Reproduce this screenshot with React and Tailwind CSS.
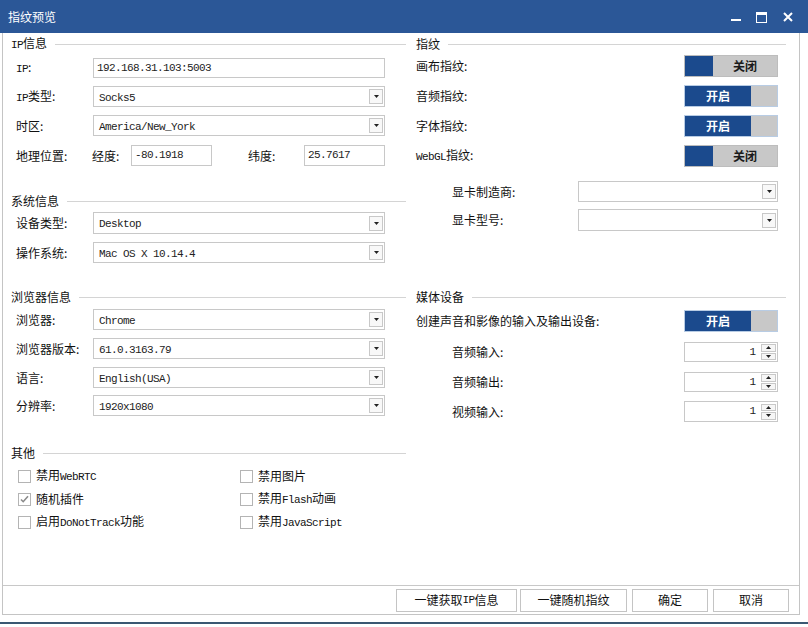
import React from "react";

// 字体：中文用 Noto Sans CJK SC，英文数字用等宽字体（模拟宋体半角）
const cjk = "font-['Noto_Sans_CJK_SC','Noto_Sans',sans-serif]";
const mono = "font-['Liberation_Mono','Noto_Sans_CJK_SC',monospace]";

// 把一段文字里的英文/数字部分换成等宽字体
function Txt({ children }) {
  if (typeof children !== "string") return children;
  const parts = children.split(/([A-Za-z0-9.]+)/);
  return parts.map((p, i) =>
    /^[A-Za-z0-9.]+$/.test(p) ? (
      <span key={i} className={`${mono} text-[11px] tracking-[-0.6px]`}>
        {p}
      </span>
    ) : (
      <React.Fragment key={i}>{p}</React.Fragment>
    )
  );
}

function GroupHeader({ title, className = "" }) {
  return (
    <div className={`flex items-center h-[16px] ${className}`}>
      <span className="text-[12px] leading-none text-[#111]">
        <Txt>{title}</Txt>
      </span>
      <div className="flex-1 border-t border-[#d4d4d4] ml-[8px]" />
    </div>
  );
}

function DropArrow() {
  return (
    <div className="w-[14px] h-[15px] mr-[1px] border border-[#c8c8c8] bg-[#f8f8f8] flex items-center justify-center">
      <svg width="5" height="3" viewBox="0 0 5 3">
        <path d="M0 0h5L2.5 3z" fill="#222" />
      </svg>
    </div>
  );
}

function Select({ value, className = "" }) {
  return (
    <div className={`flex items-center justify-between border border-[#c8c8c8] bg-white ${className}`}>
      <span className={`${mono} text-[11px] tracking-[-0.6px] text-[#222] pl-[5px] pt-[1px] self-start mt-[2px]`}>
        {value}
      </span>
      <DropArrow />
    </div>
  );
}

function TextBox({ value, className = "" }) {
  return (
    <div className={`flex items-center border border-[#c8c8c8] bg-white ${className}`}>
      <span className={`${mono} text-[11px] tracking-[-0.6px] text-[#222] pl-[3px]`}>{value}</span>
    </div>
  );
}

function FieldRow({ label, children, className = "" }) {
  return (
    <div className={`flex items-center ${className}`}>
      <span className="w-[77px] text-[12px] text-[#111] pl-[13px] box-content">
        <Txt>{label}</Txt>
      </span>
      {children}
    </div>
  );
}

function Toggle({ on }) {
  if (on) {
    return (
      <div className="w-[94px] h-[22px] bg-[#c8c8c8] flex border border-[#b8cce4]">
        <div className="w-[66px] h-full bg-[#1b4a8d] flex items-center justify-center text-white text-[12px] font-bold">
          开启
        </div>
      </div>
    );
  }
  return (
    <div className="w-[94px] h-[22px] bg-[#c8c8c8] flex border border-[#bdbdbd]">
      <div className="w-[28px] h-full bg-[#1b4a8d]" />
      <div className="flex-1 flex items-center justify-center text-[12px] font-bold text-[#1a1a1a]">关闭</div>
    </div>
  );
}

function Spinner({ value, className = "" }) {
  return (
    <div className={`w-[94px] h-[20px] border border-[#c8c8c8] bg-white flex items-center justify-end ${className}`}>
      <span className={`${mono} text-[11px] text-[#222] mr-[5px]`}>{value}</span>
      <div className="w-[15px] h-[16px] mr-[1px] flex flex-col gap-[1px]">
        <div className="flex-1 border border-[#c8c8c8] bg-[#f6f6f6] flex items-center justify-center">
          <svg width="5" height="3" viewBox="0 0 5 3">
            <path d="M0 3h5L2.5 0z" fill="#222" />
          </svg>
        </div>
        <div className="flex-1 border border-[#c8c8c8] bg-[#f6f6f6] flex items-center justify-center">
          <svg width="5" height="3" viewBox="0 0 5 3">
            <path d="M0 0h5L2.5 3z" fill="#222" />
          </svg>
        </div>
      </div>
    </div>
  );
}

function Check({ label, checked }) {
  return (
    <div className="flex items-center h-[16px]">
      <div className="w-[13px] h-[13px] border border-[#b4b4b4] bg-white flex items-center justify-center">
        {checked && (
          <svg width="9" height="8" viewBox="0 0 9 8">
            <path d="M1 4.5l2.2 2.2L8 1.2" stroke="#8a8a8a" strokeWidth="1.6" fill="none" />
          </svg>
        )}
      </div>
      <span className="ml-[5px] text-[12px] text-[#111]">
        <Txt>{label}</Txt>
      </span>
    </div>
  );
}

function RightRow({ label, children, className = "", indent = false }) {
  return (
    <div className={`flex items-center justify-between pr-[21px] ${indent ? "pl-[46px]" : "pl-[10px]"} ${className}`}>
      <span className="text-[12px] text-[#111]">
        <Txt>{label}</Txt>
      </span>
      {children}
    </div>
  );
}

function Btn({ children, className = "" }) {
  return (
    <div className={`h-[23px] border border-[#c4c4c4] bg-white flex items-center justify-center text-[12px] text-[#111] ${className}`}>
      <Txt>{children}</Txt>
    </div>
  );
}

export default function App() {
  return (
    <div className={`w-[808px] h-[627px] bg-white overflow-hidden flex flex-col ${cjk}`}>
      {/* 标题栏 */}
      <div className="h-[33px] shrink-0 bg-[#2b5797] flex items-center justify-between pl-[8px]">
        <span className="text-white text-[12px]">指纹预览</span>
        <div className="flex items-center h-full">
          <svg width="12" height="12" viewBox="0 0 12 12" className="mr-[14px] mt-[1px]">
            <rect x="1" y="8" width="10" height="2" fill="#fff" />
          </svg>
          <svg width="11" height="11" viewBox="0 0 11 11" className="mr-[16px] mt-[1px]">
            <rect x="0.5" y="0.5" width="10" height="10" fill="none" stroke="#fff" />
            <rect x="0" y="0" width="11" height="3" fill="#fff" />
          </svg>
          <svg width="10" height="10" viewBox="0 0 10 10" className="mr-[15px] mt-[1px]">
            <path d="M1 1l8 8M9 1l-8 8" stroke="#fff" strokeWidth="2" />
          </svg>
        </div>
      </div>

      {/* 窗体 */}
      <div className="ml-[2px] w-[798px] h-[582px] shrink-0 border-x border-b border-[#c4c4c4] flex flex-col">
        <div className="h-[552px] flex pt-[3px]">
          {/* 左列 */}
          <div className="w-[403px] flex flex-col">
            <GroupHeader title="IP信息" className="pl-[8px]" />
            <FieldRow label="IP:" className="mt-[6px] h-[20px]">
              <TextBox value="192.168.31.103:5003" className="w-[292px] h-[20px]" />
            </FieldRow>
            <FieldRow label="IP类型:" className="mt-[8px] h-[21px]">
              <Select value="Socks5" className="w-[292px] h-[21px]" />
            </FieldRow>
            <FieldRow label="时区:" className="mt-[8px] h-[21px]">
              <Select value="America/New_York" className="w-[292px] h-[21px]" />
            </FieldRow>
            <div className="mt-[9px] h-[21px] flex items-center">
              <span className="w-[76px] text-[12px] text-[#111] pl-[13px] box-content">地理位置:</span>
              <span className="w-[39px] text-[12px] text-[#111]">经度:</span>
              <TextBox value="-80.1918" className="w-[81px] h-[21px]" />
              <span className="ml-[36px] w-[56px] text-[12px] text-[#111]">纬度:</span>
              <TextBox value="25.7617" className="w-[81px] h-[21px]" />
            </div>

            <GroupHeader title="系统信息" className="pl-[8px] mt-[27px]" />
            <FieldRow label="设备类型:" className="mt-[3px] h-[22px]">
              <Select value="Desktop" className="w-[292px] h-[22px]" />
            </FieldRow>
            <FieldRow label="操作系统:" className="mt-[8px] h-[21px]">
              <Select value="Mac OS X 10.14.4" className="w-[292px] h-[21px]" />
            </FieldRow>

            <GroupHeader title="浏览器信息" className="pl-[8px] mt-[26px]" />
            <FieldRow label="浏览器:" className="mt-[4px] h-[21px]">
              <Select value="Chrome" className="w-[292px] h-[21px]" />
            </FieldRow>
            <FieldRow label="浏览器版本:" className="mt-[8px] h-[21px]">
              <Select value="61.0.3163.79" className="w-[292px] h-[21px]" />
            </FieldRow>
            <FieldRow label="语言:" className="mt-[8px] h-[21px]">
              <Select value="English(USA)" className="w-[292px] h-[21px]" />
            </FieldRow>
            <FieldRow label="分辨率:" className="mt-[7px] h-[21px]">
              <Select value="1920x1080" className="w-[292px] h-[21px]" />
            </FieldRow>

            <GroupHeader title="其他" className="pl-[8px] mt-[29px]" />
            <div className="grid grid-cols-[222px_1fr] pl-[15px] mt-[7px] gap-y-[7px]">
              <Check label="禁用WebRTC" />
              <Check label="禁用图片" />
              <Check label="随机插件" checked />
              <Check label="禁用Flash动画" />
              <Check label="启用DoNotTrack功能" />
              <Check label="禁用JavaScript" />
            </div>
          </div>

          {/* 右列 */}
          <div className="flex-1 flex flex-col">
            <GroupHeader title="指纹" className="pl-[10px] pr-[13px]" />
            <RightRow label="画布指纹:" className="mt-[3px] h-[22px]">
              <Toggle on={false} />
            </RightRow>
            <RightRow label="音频指纹:" className="mt-[8px] h-[22px]">
              <Toggle on />
            </RightRow>
            <RightRow label="字体指纹:" className="mt-[8px] h-[22px]">
              <Toggle on />
            </RightRow>
            <RightRow label="WebGL指纹:" className="mt-[8px] h-[22px]">
              <Toggle on={false} />
            </RightRow>
            <RightRow label="显卡制造商:" indent className="mt-[14px] h-[21px]">
              <Select value="" className="w-[200px] h-[21px]" />
            </RightRow>
            <RightRow label="显卡型号:" indent className="mt-[7px] h-[22px]">
              <Select value="" className="w-[200px] h-[22px]" />
            </RightRow>

            <GroupHeader title="媒体设备" className="pl-[10px] pr-[13px] mt-[58px]" />
            <RightRow label="创建声音和影像的输入及输出设备:" className="mt-[5px] h-[22px]">
              <Toggle on />
            </RightRow>
            <RightRow label="音频输入:" indent className="mt-[10px] h-[20px]">
              <Spinner value="1" />
            </RightRow>
            <RightRow label="音频输出:" indent className="mt-[10px] h-[20px]">
              <Spinner value="1" />
            </RightRow>
            <RightRow label="视频输入:" indent className="mt-[9px] h-[21px]">
              <Spinner value="1" className="h-[21px]" />
            </RightRow>
          </div>
        </div>

        {/* 底部按钮 */}
        <div className="flex-1 border-t border-[#c8c8c8] flex items-center justify-end pr-[10px]">
          <Btn className="w-[121px]">一键获取IP信息</Btn>
          <Btn className="w-[107px] ml-[3px]">一键随机指纹</Btn>
          <Btn className="w-[76px] ml-[5px]">确定</Btn>
          <Btn className="w-[76px] ml-[5px]">取消</Btn>
        </div>
      </div>

      <div className="mt-[7px] h-[2px] w-full bg-[#3a5872]" />
    </div>
  );
}
